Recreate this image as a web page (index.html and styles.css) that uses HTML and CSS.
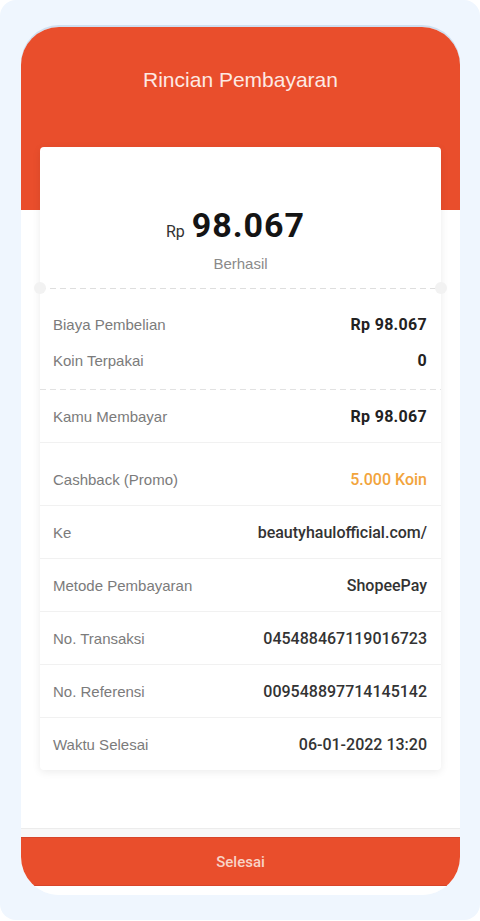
FILE: index.html
```html
<!DOCTYPE html>
<html lang="id">
<head>
<meta charset="utf-8">
<title>Rincian Pembayaran</title>
<link rel="stylesheet" href="styles.css">
</head>
<body>
<div class="frame">
  <div class="phone">
    <header class="title">Rincian Pembayaran</header>
    <section class="card">
      <div class="amount-box">
        <div class="amount"><span class="cur">Rp</span><span class="num">98.067</span></div>
        <div class="status">Berhasil</div>
      </div>
      <div class="tear"></div>
      <div class="group">
        <div class="row"><span class="label">Biaya Pembelian</span><span class="value strong">Rp 98.067</span></div>
        <div class="row"><span class="label">Koin Terpakai</span><span class="value strong">0</span></div>
      </div>
      <div class="dash"></div>
      <div class="row line"><span class="label">Kamu Membayar</span><span class="value strong">Rp 98.067</span></div>
      <div class="row line cashback"><span class="label">Cashback (Promo)</span><span class="value promo">5.000 Koin</span></div>
      <div class="row line"><span class="label">Ke</span><span class="value">beautyhaulofficial.com/</span></div>
      <div class="row line"><span class="label">Metode Pembayaran</span><span class="value">ShopeePay</span></div>
      <div class="row line"><span class="label">No. Transaksi</span><span class="value">045488467119016723</span></div>
      <div class="row line"><span class="label">No. Referensi</span><span class="value">009548897714145142</span></div>
      <div class="row line last"><span class="label">Waktu Selesai</span><span class="value">06-01-2022 13:20</span></div>
    </section>
    <footer class="footer">
      <div class="btn">Selesai</div>
    </footer>
  </div>
</div>
</body>
</html>
```
FILE: styles.css
```css
html, body {
  margin: 0;
  background: #ffffff;
}

.frame {
  width: 480px;
  height: 920px;
  box-sizing: border-box;
  padding-top: 27px;
  background: #eff6fe;
  border-radius: 16px;
}

.phone {
  margin: 0 20px 0 21px;
  height: 868px;
  border-radius: 38px;
  overflow: hidden;
  background: linear-gradient(#e94e2c 0 183px, #ffffff 183px);
  display: flex;
  flex-direction: column;
  box-shadow: 0 -2px 0 #cfdff0;
}

.title {
  padding-top: 40px;
  line-height: 26px;
  font-family: "Liberation Sans", Arial, sans-serif;
  font-size: 21px;
  color: #fde9e3;
  text-align: center;
}

.card {
  margin: 54px 19px 0;
  background: #ffffff;
  border-radius: 4px;
  box-shadow: 0 2px 8px rgba(0, 0, 0, 0.08);
}

.amount-box {
  padding: 58px 0 13px;
  text-align: center;
}

.amount {
  display: flex;
  justify-content: center;
  align-items: baseline;
  gap: 7px;
  height: 40px;
  line-height: 40px;
  padding-right: 10px;
}

.cur {
  font-family: Roboto, sans-serif;
  font-size: 16px;
  line-height: 20px;
  color: #333333;
}

.num {
  font-family: Roboto, sans-serif;
  font-weight: 700;
  font-size: 34px;
  letter-spacing: 1px;
  color: #141414;
}

.status {
  margin-top: 9px;
  line-height: 20px;
  font-family: "Liberation Sans", Arial, sans-serif;
  font-size: 15px;
  color: #8a8a8a;
}

.tear {
  position: relative;
  height: 1px;
  margin: 1px 0;
  background: repeating-linear-gradient(90deg, #dedede 0 6px, transparent 6px 10px);
}

.tear::before,
.tear::after {
  content: "";
  position: absolute;
  top: -6px;
  width: 12px;
  height: 12px;
  border-radius: 50%;
  background: #f2f2f2;
}

.tear::before { left: -6px; }
.tear::after { right: -6px; }

.group {
  padding: 16px 0 11px;
}

.dash {
  height: 1px;
  background: repeating-linear-gradient(90deg, #e2e2e2 0 6px, transparent 6px 10px);
}

.row {
  display: flex;
  justify-content: space-between;
  align-items: center;
  padding: 0 14px 0 13px;
  height: 36px;
}

.row.line {
  height: 52px;
  border-bottom: 1px solid #f1f1f1;
}

.row.line.last {
  border-bottom: none;
}

.row.cashback {
  height: 63px;
  box-sizing: border-box;
  padding-top: 11px;
}

.label {
  font-family: "Liberation Sans", Arial, sans-serif;
  font-size: 15px;
  color: #7b7b7b;
}

.value {
  font-family: Roboto, sans-serif;
  font-weight: 500;
  font-size: 16px;
  color: #333333;
}

.value.strong {
  font-weight: 700;
  color: #222222;
  letter-spacing: 0.3px;
}

.value.promo {
  color: #f2a43c;
}

.footer {
  margin-top: auto;
  border-top: 1px solid #ececec;
  padding: 8px 0 9px;
  background: linear-gradient(#f8f8f8 0 8px, #ffffff 8px);
}

.btn {
  height: 49px;
  box-sizing: border-box;
  border-top: 1px solid #d8452a;
  border-bottom: 1px solid #d8452a;
  background: #e94e2c;
  display: flex;
  align-items: center;
  justify-content: center;
  font-family: Roboto, sans-serif;
  font-weight: 500;
  font-size: 15px;
  color: #f8d3c7;
}
```
